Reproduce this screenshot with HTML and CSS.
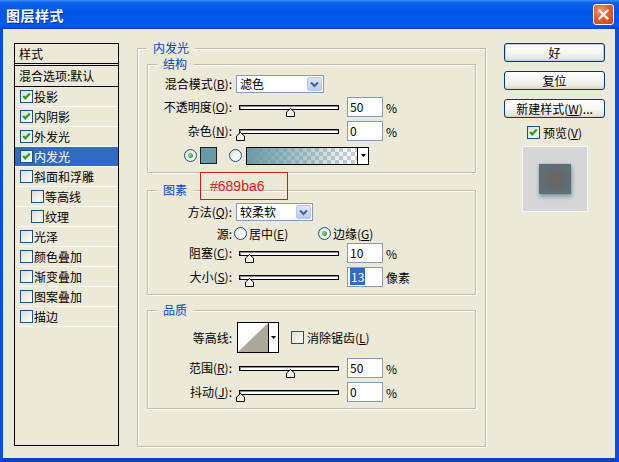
FILE: index.html
```html
<!DOCTYPE html>
<html>
<head>
<meta charset="utf-8">
<title>图层样式</title>
<link rel="stylesheet" href="styles.css">
</head>
<body>
<div class="window">
  <div class="titlebar">
    <span class="title">图层样式</span>
    <span class="close"><svg width="19" height="19" viewBox="0 0 19 19"><path d="M5.5 5.5 L13.5 13.5 M13.5 5.5 L5.5 13.5" stroke="#fff" stroke-width="2.2" stroke-linecap="square"/></svg></span>
  </div>
  <div class="frame">
    <div class="content">
      <div class="list">
        <div class="list-head">样式</div>
        <div class="list-blend">混合选项:默认</div>
        <div class="item"><span class="cb"><svg width="11" height="11" viewBox="0 0 11 11"><path d="M2.2 5 L4.3 7.3 L8.8 2.6" fill="none" stroke="#21A121" stroke-width="2.2"/></svg></span>投影</div>
        <div class="item"><span class="cb"><svg width="11" height="11" viewBox="0 0 11 11"><path d="M2.2 5 L4.3 7.3 L8.8 2.6" fill="none" stroke="#21A121" stroke-width="2.2"/></svg></span>内阴影</div>
        <div class="item"><span class="cb"><svg width="11" height="11" viewBox="0 0 11 11"><path d="M2.2 5 L4.3 7.3 L8.8 2.6" fill="none" stroke="#21A121" stroke-width="2.2"/></svg></span>外发光</div>
        <div class="item sel"><span class="cb"><svg width="11" height="11" viewBox="0 0 11 11"><path d="M2.2 5 L4.3 7.3 L8.8 2.6" fill="none" stroke="#21A121" stroke-width="2.2"/></svg></span>内发光</div>
        <div class="item"><span class="cb"></span>斜面和浮雕</div>
        <div class="item sub"><span class="cb"></span>等高线</div>
        <div class="item sub"><span class="cb"></span>纹理</div>
        <div class="item"><span class="cb"></span>光泽</div>
        <div class="item"><span class="cb"></span>颜色叠加</div>
        <div class="item"><span class="cb"></span>渐变叠加</div>
        <div class="item"><span class="cb"></span>图案叠加</div>
        <div class="item"><span class="cb"></span>描边</div>
      </div>

      <fieldset class="grp main">
        <legend>内发光</legend>

        <fieldset class="grp sub s1">
          <legend>结构</legend>
          <div class="row h18">
            <span class="lbl">混合模式(<u>B</u>):</span>
            <div class="combo w1"><span>滤色</span><span class="combo-btn"><svg width="9" height="7" viewBox="0 0 9 7"><path d="M1 1.5 L4.5 5 L8 1.5" fill="none" stroke="#4D6185" stroke-width="2"/></svg></span></div>
          </div>
          <div class="row h20 mt4">
            <span class="lbl">不透明度(<u>O</u>):</span>
            <div class="slider"><div class="track"></div><svg class="thumb" style="--v:50" width="9" height="9" viewBox="0 0 9 9"><polygon points="0.5,8.5 0.5,4 4.5,0.5 8.5,4 8.5,8.5" fill="#F2F0E6" stroke="#000"/></svg></div>
            <span class="num">50</span><span class="unit">%</span>
          </div>
          <div class="row h20 mt4">
            <span class="lbl">杂色(<u>N</u>):</span>
            <div class="slider"><div class="track"></div><svg class="thumb" style="--v:0" width="9" height="9" viewBox="0 0 9 9"><polygon points="0.5,8.5 0.5,4 4.5,0.5 8.5,4 8.5,8.5" fill="#F2F0E6" stroke="#000"/></svg></div>
            <span class="num">0</span><span class="unit">%</span>
          </div>
          <div class="row colors mt5">
            <span class="radio on"></span>
            <span class="swatch"></span>
            <span class="radio r2"></span>
            <div class="gradbox"><span class="gradfill"></span><span class="gradbtn"><svg width="5" height="3" viewBox="0 0 5 3"><polygon points="0,0 5,0 2.5,3" fill="#000"/></svg></span></div>
          </div>
        </fieldset>

        <fieldset class="grp sub s2">
          <legend>图素</legend>
          <div class="row h18">
            <span class="lbl">方法(<u>Q</u>):</span>
            <div class="combo w2"><span>较柔软</span><span class="combo-btn"><svg width="9" height="7" viewBox="0 0 9 7"><path d="M1 1.5 L4.5 5 L8 1.5" fill="none" stroke="#4D6185" stroke-width="2"/></svg></span></div>
          </div>
          <div class="row h17 mt4">
            <span class="lbl tight">源:</span>
            <span class="opt"><span class="radio"></span><span class="opt-t">居中(<u>E</u>)</span></span>
            <span class="opt"><span class="radio on"></span><span class="opt-t">边缘(<u>G</u>)</span></span>
          </div>
          <div class="row h20 mt1">
            <span class="lbl">阻塞(<u>C</u>):</span>
            <div class="slider"><div class="track"></div><svg class="thumb" style="--v:9" width="9" height="9" viewBox="0 0 9 9"><polygon points="0.5,8.5 0.5,4 4.5,0.5 8.5,4 8.5,8.5" fill="#F2F0E6" stroke="#000"/></svg></div>
            <span class="num">10</span><span class="unit">%</span>
          </div>
          <div class="row h20 mt4">
            <span class="lbl">大小(<u>S</u>):</span>
            <div class="slider"><div class="track"></div><svg class="thumb" style="--v:9" width="9" height="9" viewBox="0 0 9 9"><polygon points="0.5,8.5 0.5,4 4.5,0.5 8.5,4 8.5,8.5" fill="#F2F0E6" stroke="#000"/></svg></div>
            <span class="num"><span class="hl">13</span></span><span class="unit">像素</span>
          </div>
        </fieldset>

        <fieldset class="grp sub s3">
          <legend>品质</legend>
          <div class="row h31">
            <span class="lbl">等高线:</span>
            <div class="contour">
              <span class="cprev"><svg width="30" height="29" viewBox="0 0 30 29"><polygon points="0,29 30,0 30,29" fill="#ACA89C"/></svg></span>
              <span class="cbtn"><svg width="5" height="3" viewBox="0 0 5 3"><polygon points="0,0 5,0 2.5,3" fill="#000"/></svg></span>
            </div>
            <span class="cb aa"></span><span class="aa-t">消除锯齿(<u>L</u>)</span>
          </div>
          <div class="row h20 mt5">
            <span class="lbl">范围(<u>R</u>):</span>
            <div class="slider"><div class="track"></div><svg class="thumb" style="--v:50" width="9" height="9" viewBox="0 0 9 9"><polygon points="0.5,8.5 0.5,4 4.5,0.5 8.5,4 8.5,8.5" fill="#F2F0E6" stroke="#000"/></svg></div>
            <span class="num">50</span><span class="unit">%</span>
          </div>
          <div class="row h20 mt4">
            <span class="lbl">抖动(<u>J</u>):</span>
            <div class="slider"><div class="track"></div><svg class="thumb" style="--v:0" width="9" height="9" viewBox="0 0 9 9"><polygon points="0.5,8.5 0.5,4 4.5,0.5 8.5,4 8.5,8.5" fill="#F2F0E6" stroke="#000"/></svg></div>
            <span class="num">0</span><span class="unit">%</span>
          </div>
        </fieldset>
      </fieldset>

      <div class="side">
        <div class="btn def">好</div>
        <div class="btn">复位</div>
        <div class="btn last">新建样式(<u>W</u>)...</div>
        <div class="pv"><span class="cb"><svg width="11" height="11" viewBox="0 0 11 11"><path d="M2.2 5 L4.3 7.3 L8.8 2.6" fill="none" stroke="#21A121" stroke-width="2.2"/></svg></span><span class="pv-t">预览(<u>V</u>)</span></div>
        <div class="pvbox"><span class="pvsq"></span></div>
      </div>
    </div>
    <div class="note">#689ba6</div>
  </div>
</div>
</body>
</html>
```

FILE: styles.css
```css
* { box-sizing: border-box; }
html, body { margin: 0; padding: 0; }
body {
  width: 619px;
  height: 462px;
  overflow: hidden;
  background: #ECE9D8;
  font-family: "Noto Sans CJK SC", "Noto Sans", sans-serif;
  font-size: 12px;
  color: #000;
}
u { text-decoration-thickness: 1px; text-underline-offset: 1px; }

.window { width: 619px; height: 462px; display: flex; flex-direction: column; }

.titlebar {
  height: 29px;
  flex: none;
  display: flex;
  align-items: center;
  justify-content: space-between;
  padding: 0 5px 0 6px;
  background: linear-gradient(to bottom, #3C8CF8 0%, #0A5FE8 10%, #0055E6 45%, #005AEE 85%, #0050DC 95%, #0041C0 100%);
}
.title {
  color: #fff;
  font-weight: bold;
  font-size: 14px;
  letter-spacing: 0.5px;
  text-shadow: 1px 1px 0 #0C2B8F;
}
.close {
  width: 21px;
  height: 21px;
  border: 1px solid #fff;
  border-radius: 3px;
  background: radial-gradient(circle at 35% 30%, #F39B7E 0%, #E35D34 45%, #C9411C 100%);
  display: flex;
  align-items: center;
  justify-content: center;
}

.frame {
  flex: 1;
  position: relative;
  background: #ECE9D8;
  border-left: 3px solid #0A4FD8;
  border-right: 4px solid #0A4FD8;
  border-bottom: 4px solid #0843C4;
}
.content {
  display: flex;
  align-items: flex-start;
  padding: 12px 0 0 11px;
}

/* style list */
.list {
  width: 105px;
  height: 403px;
  margin-top: 2px;
  border: 1px solid #000;
  flex: none;
}
.list-head {
  height: 22px;
  padding-left: 4px;
  line-height: 19px;
  border-bottom: 3px double #000;
}
.list-blend {
  height: 21px;
  padding-left: 4px;
  line-height: 20px;
  border-bottom: 1px solid #000;
}
.item {
  height: 20px;
  border-bottom: 1px solid #FBFAF6;
  display: flex;
  align-items: center;
  padding-left: 5px;
  white-space: nowrap;
}
.item .cb { margin-right: 1px; }
.item.sub { padding-left: 16px; }
.item.sel { background: #316AC5; color: #fff; }

.cb {
  width: 13px;
  height: 13px;
  flex: none;
  border: 1px solid #1C5180;
  background: linear-gradient(135deg, #DCDCD7 0%, #F4F4F0 70%, #fff 100%);
  display: flex;
  align-items: center;
  justify-content: center;
}

/* group boxes */
.grp {
  margin: 0;
  padding: 0;
  min-width: 0;
  border: 1px solid #BDBCAE;
  box-shadow: inset 1px 1px 0 #fff, 1px 1px 0 #fff;
}
legend {
  color: #0046D5;
  font-size: 12px;
  line-height: 14px;
  padding: 0 6px;
  background: #ECE9D8;
}
.main {
  width: 349px;
  height: 406px;
  margin-left: 18px;
  padding: 2px 9px 0 9px;
  flex: none;
}
.sub > legend { margin-left: 9px; }
.s1 { height: 116px; padding-top: 4px; }
.s2 { height: 112px; padding-top: 6px; margin-top: 10px; }
.s3 { height: 106px; padding-top: 5px; margin-top: 8px; }

.row { display: flex; align-items: center; }
.h17 { height: 17px; }
.h18 { height: 18px; }
.h20 { height: 20px; }
.h31 { height: 31px; }
.mt1 { margin-top: 1px; }
.mt4 { margin-top: 4px; }
.mt5 { margin-top: 5px; }

.lbl {
  width: 84px;
  flex: none;
  text-align: right;
  margin-right: 4px;
  white-space: nowrap;
  line-height: 16px;
}
.lbl.tight { margin-right: 2px; }

.combo {
  height: 18px;
  border: 1px solid #7F9DB9;
  background: #fff;
  display: flex;
  align-items: center;
  justify-content: space-between;
  padding: 0 1px 0 3px;
  line-height: 16px;
}
.combo.w1 { width: 88px; }
.combo.w2 { width: 77px; }
.combo-btn {
  width: 15px;
  height: 14px;
  border: 1px solid #B5C8F2;
  border-radius: 2px;
  background: linear-gradient(#DCE6FC, #B9CCF7);
  display: flex;
  align-items: center;
  justify-content: center;
}

.slider { width: 106px; height: 20px; position: relative; flex: none; }
.track {
  margin: 8px 3px 0;
  height: 5px;
  border: 1px solid #000;
  background: #fff;
  box-shadow: inset 1px 1px 0 #8E8E8E;
}
.thumb {
  position: absolute;
  top: 11px;
  left: calc(var(--v) * 1px);
  display: block;
}
.num {
  width: 36px;
  height: 20px;
  margin-left: 5px;
  border: 1px solid #7F9DB9;
  background: #fff;
  padding-left: 2px;
  line-height: 18px;
  flex: none;
}
.hl { background: #316AC5; color: #fff; padding: 0 1px; }
.unit { margin-left: 3px; }

.radio {
  width: 13px;
  height: 13px;
  flex: none;
  border-radius: 50%;
  border: 1px solid #1C5180;
  background: radial-gradient(circle at 65% 65%, #fff 0%, #F2F2EE 45%, #D6D5CE 100%);
  position: relative;
}
.radio.on::after {
  content: "";
  position: absolute;
  left: 3px;
  top: 3px;
  width: 5px;
  height: 5px;
  border-radius: 50%;
  background: radial-gradient(circle at 40% 40%, #8CE58C 0%, #21A121 75%);
}

.colors { height: 19px; padding-left: 36px; }
.swatch {
  width: 17px;
  height: 17px;
  margin-left: 3px;
  border: 1px solid #1E1E1E;
  background: #689BA6;
  flex: none;
}
.radio.r2 { margin-left: 12px; }
.gradbox {
  width: 123px;
  height: 18px;
  margin-left: 4px;
  border: 1px solid #000;
  display: flex;
  flex: none;
}
.gradfill {
  flex: 1;
  background:
    linear-gradient(to right, #689BA6 0%, rgba(104,155,166,0.6) 45%, rgba(104,155,166,0) 100%),
    conic-gradient(#CFCFCF 25%, #fff 0 50%, #CFCFCF 0 75%, #fff 0) 0 0 / 8px 8px;
}
.gradbtn {
  width: 11px;
  border-left: 1px solid #000;
  background: #fff;
  display: flex;
  align-items: center;
  justify-content: center;
}

.opt { display: flex; align-items: center; width: 84px; flex: none; }
.opt-t { margin-left: 2px; white-space: nowrap; }

.contour {
  width: 42px;
  height: 31px;
  margin-left: 1px;
  border: 1px solid #000;
  background: #fff;
  display: flex;
  flex: none;
}
.cprev { width: 30px; display: flex; align-items: flex-end; }
.cbtn {
  flex: 1;
  border-left: 1px solid #000;
  display: flex;
  align-items: center;
  justify-content: center;
}
.cb.aa { margin-left: 12px; }
.aa-t { margin-left: 3px; white-space: nowrap; }

/* right column */
.side {
  width: 101px;
  margin-left: 18px;
  margin-top: 2px;
  flex: none;
  display: flex;
  flex-direction: column;
  align-items: center;
}
.btn {
  width: 101px;
  height: 19px;
  margin-bottom: 9px;
  border: 1px solid #003C74;
  border-radius: 3px;
  background: linear-gradient(#FFFFFF 0%, #F5F4EF 55%, #E6E4DA 88%, #D6D0C5 100%);
  text-align: center;
  line-height: 17px;
  white-space: nowrap;
}
.btn.def { box-shadow: inset 0 0 0 1px #B7CDF2; }
.btn.last { margin-bottom: 8px; }
.pv { display: flex; align-items: center; height: 13px; }
.pv-t { margin-left: 3px; white-space: nowrap; }
.pvbox {
  margin-top: 7px;
  width: 66px;
  height: 66px;
  border: 1px solid #F6F6F4;
  background: #D6D6D6;
  display: flex;
  align-items: center;
  justify-content: center;
}
.pvsq {
  width: 32px;
  height: 30px;
  background: radial-gradient(circle at 50% 50%, #6C6466 0%, #646A6E 45%, #587580 100%);
  box-shadow: 1px 3px 4px rgba(80, 125, 145, 0.6), 0 0 2px rgba(90, 130, 150, 0.5);
}

/* annotation */
.note {
  position: absolute;
  left: 197px;
  top: 143px;
  width: 88px;
  height: 28px;
  border: 1px solid #D41818;
  color: #E02020;
  font-family: "Liberation Sans", Arial, sans-serif;
  font-size: 14px;
  line-height: 26px;
  padding-left: 9px;
}
```
